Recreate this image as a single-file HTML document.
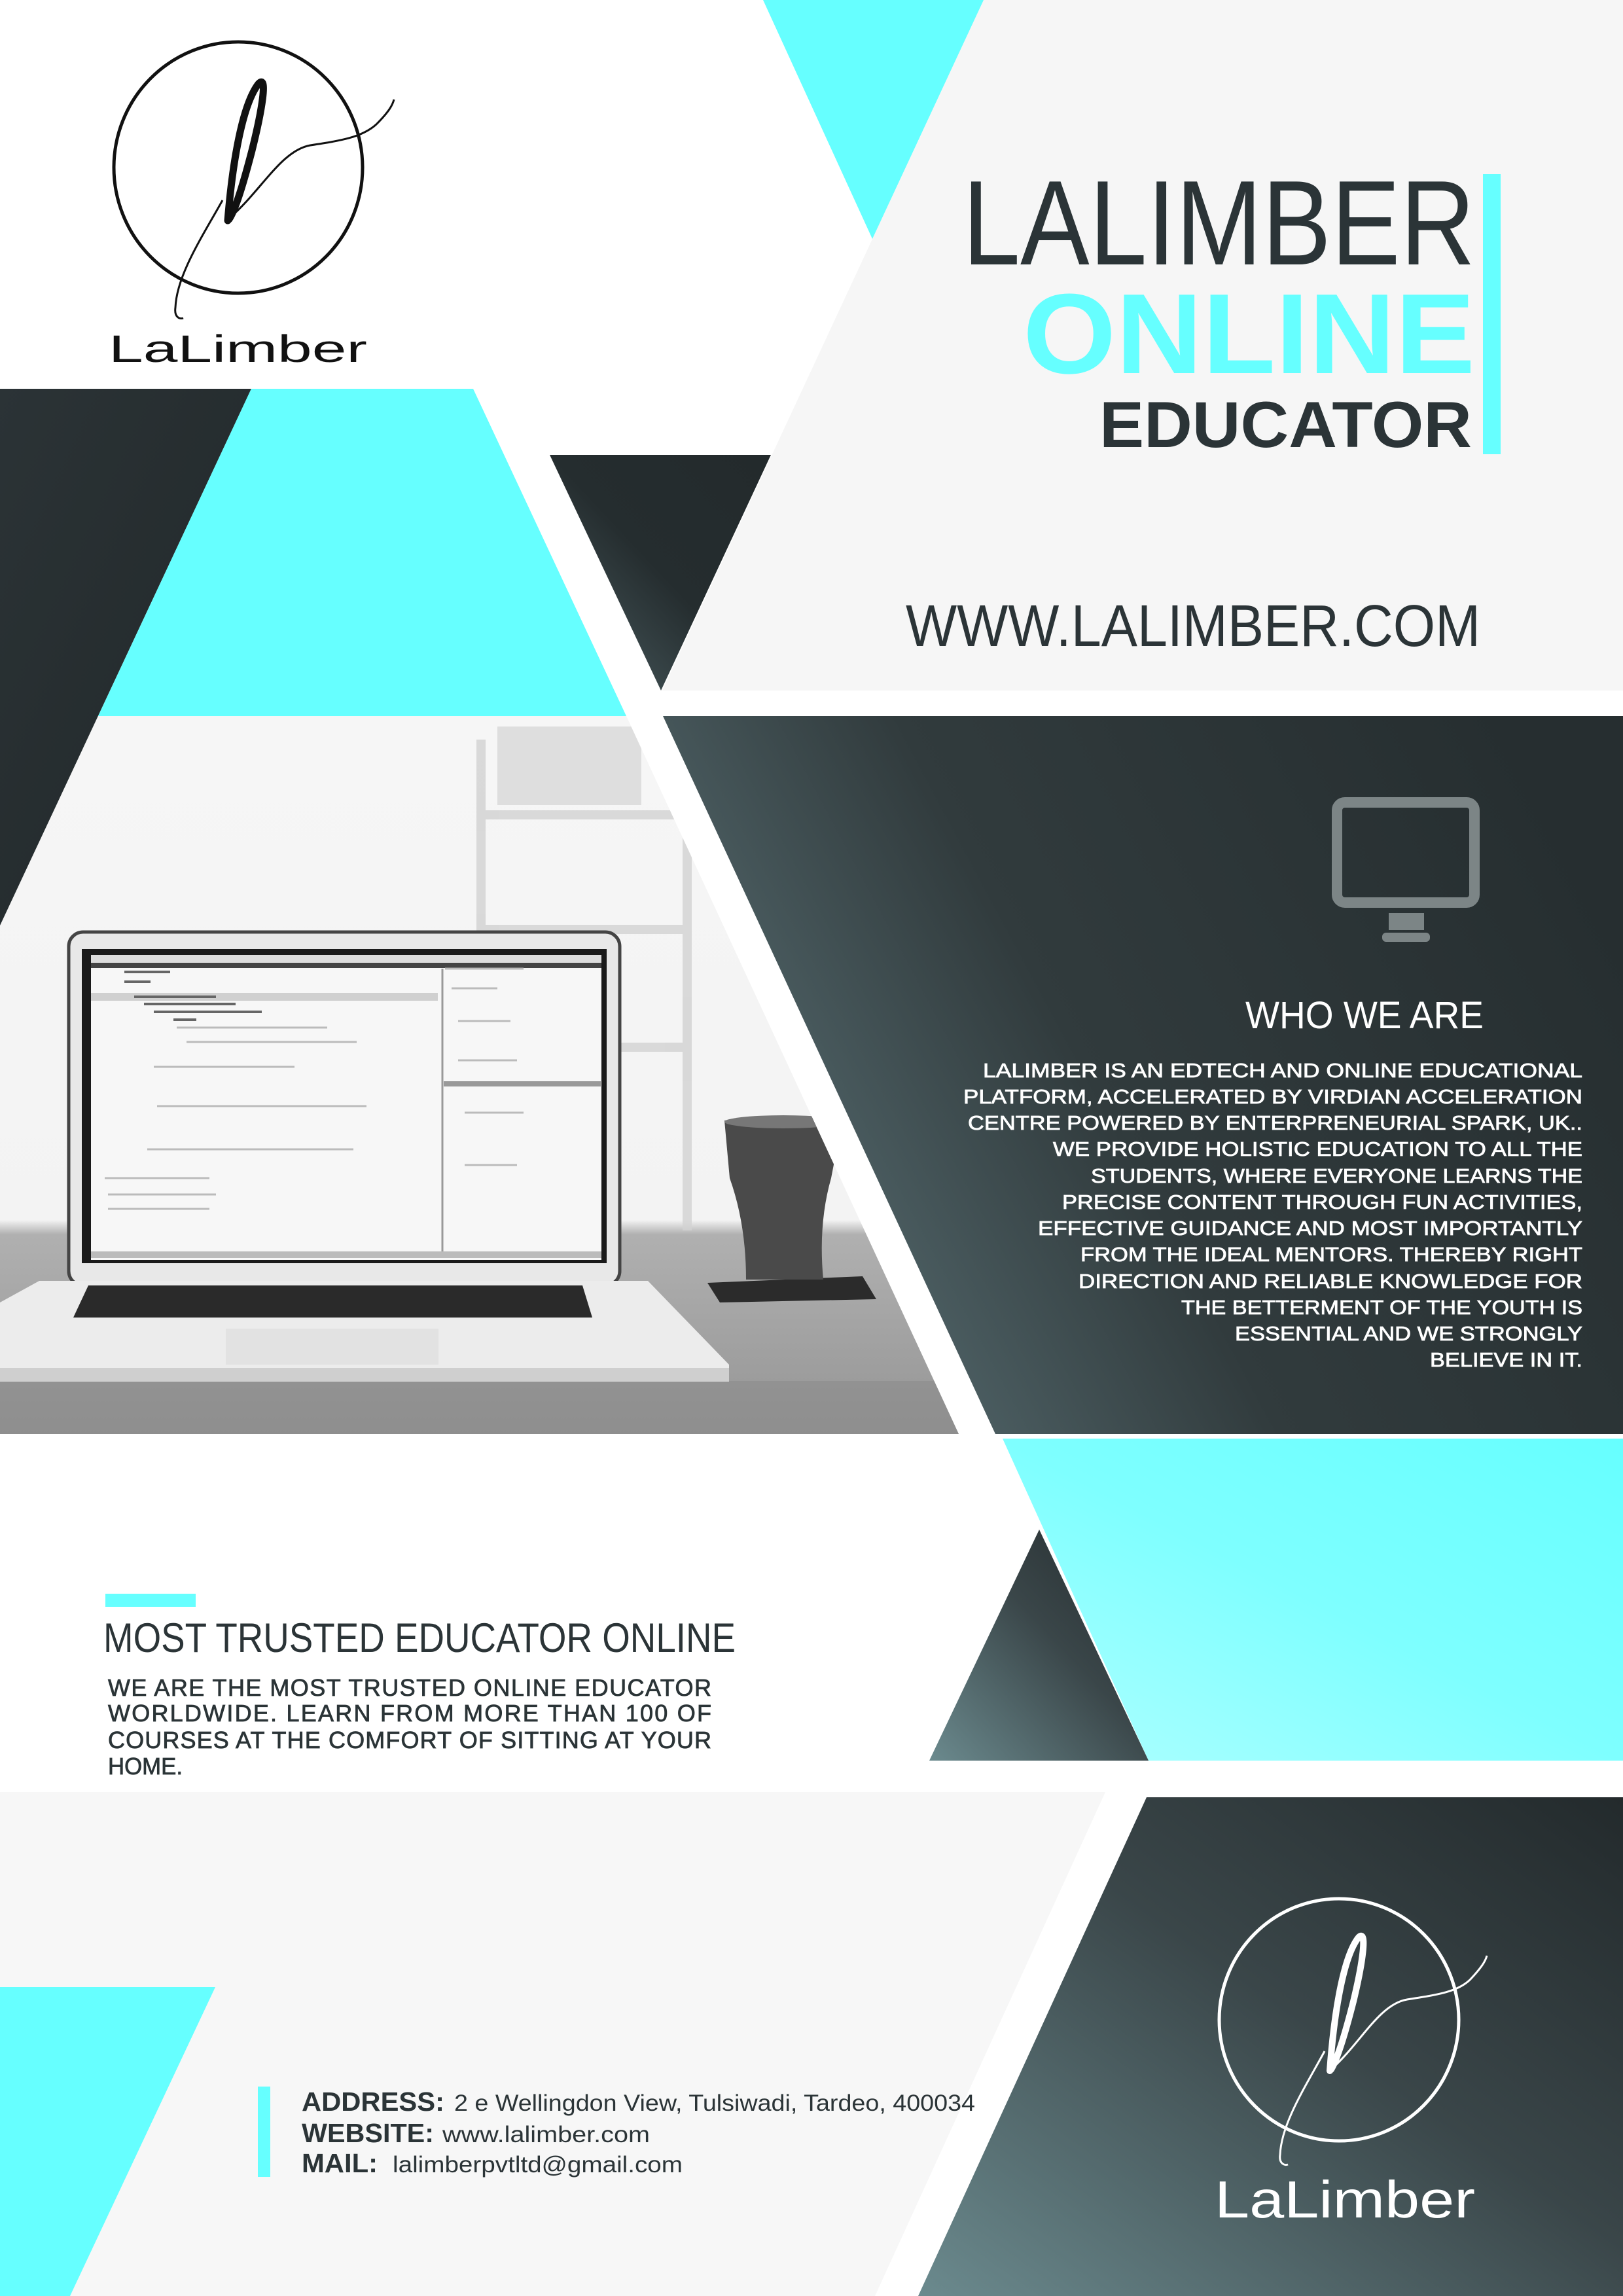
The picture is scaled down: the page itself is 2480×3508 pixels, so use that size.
<!DOCTYPE html>
<html><head><meta charset="utf-8"><style>
html,body{margin:0;padding:0;background:#fff;}
svg{display:block;}
text{font-family:"Liberation Sans",sans-serif;}
</style></head><body>
<svg width="2480" height="3508" viewBox="0 0 2480 3508" xmlns="http://www.w3.org/2000/svg">
<defs>
<linearGradient id="dk" x1="0" y1="0.7" x2="1" y2="0.3">
<stop offset="0" stop-color="#62797d"/><stop offset="0.15" stop-color="#4e6165"/><stop offset="0.45" stop-color="#313b3d"/><stop offset="1" stop-color="#262e30"/></linearGradient>
<linearGradient id="dkL" x1="0" y1="0" x2="1" y2="1">
<stop offset="0" stop-color="#2b3336"/><stop offset="0.6" stop-color="#252c2e"/><stop offset="1" stop-color="#3a4548"/></linearGradient>
<linearGradient id="dkT" x1="0" y1="1" x2="1" y2="0">
<stop offset="0" stop-color="#4d6064"/><stop offset="0.5" stop-color="#252d2f"/><stop offset="1" stop-color="#232a2c"/></linearGradient>
<linearGradient id="dkB" x1="0" y1="1" x2="1" y2="0">
<stop offset="0" stop-color="#6b8a8e"/><stop offset="0.55" stop-color="#3a4649"/><stop offset="1" stop-color="#232a2c"/></linearGradient>
<linearGradient id="cy" x1="0" y1="1" x2="1" y2="0">
<stop offset="0" stop-color="#b0ffff"/><stop offset="0.5" stop-color="#7effff"/><stop offset="1" stop-color="#66ffff"/></linearGradient>
<linearGradient id="photo" x1="0" y1="0" x2="0" y2="1">
<stop offset="0" stop-color="#f6f6f6"/><stop offset="0.7" stop-color="#f3f3f3"/><stop offset="0.72" stop-color="#b0b0b0"/><stop offset="1" stop-color="#959595"/></linearGradient>
<clipPath id="pc"><polygon points="0,1094 957,1094 1465,2191 0,2191"/></clipPath>
</defs>
<rect width="2480" height="3508" fill="#fff"/>

<polygon points="1503,0 2480,0 2480,1055 1012,1055" fill="#f6f6f6"/>
<polygon points="1166,0 1503,0 1333,365" fill="#66ffff"/>

<g clip-path="url(#pc)">
<rect x="0" y="1094" width="1500" height="1100" fill="url(#photo)"/>
<rect x="0" y="2110" width="1500" height="81" fill="#888" opacity="0.5"/>
<g stroke="#d2d2d2" stroke-width="14" fill="none" opacity="0.8">
<line x1="735" y1="1130" x2="735" y2="1880"/><line x1="1050" y1="1130" x2="1050" y2="1880"/>
<line x1="735" y1="1245" x2="1050" y2="1245"/><line x1="735" y1="1420" x2="1050" y2="1420"/><line x1="735" y1="1600" x2="1050" y2="1600"/></g>
<rect x="760" y="1110" width="220" height="120" fill="#bbb" opacity="0.4"/>
<rect x="105" y="1424" width="842" height="540" rx="22" fill="#e8e8e8" stroke="#444" stroke-width="5"/>
<rect x="125" y="1450" width="802" height="480" fill="#1a1a1a"/>
<rect x="139" y="1459" width="780" height="466" fill="#f7f7f7"/>
<rect x="139" y="1459" width="780" height="12" fill="#ddd"/>
<rect x="139" y="1471" width="780" height="8" fill="#444"/>
<rect x="139" y="1517" width="530" height="12" fill="#d0d0d0"/>
<g stroke="#666" stroke-width="4">
<line x1="190" y1="1485" x2="260" y2="1485"/><line x1="190" y1="1500" x2="230" y2="1500"/>
<line x1="205" y1="1523" x2="330" y2="1523"/><line x1="220" y1="1534" x2="360" y2="1534"/>
<line x1="235" y1="1546" x2="400" y2="1546"/><line x1="265" y1="1558" x2="300" y2="1558"/>
</g>
<g stroke="#bbb" stroke-width="3">
<line x1="270" y1="1570" x2="500" y2="1570"/><line x1="285" y1="1592" x2="545" y2="1592"/>
<line x1="235" y1="1630" x2="450" y2="1630"/><line x1="240" y1="1690" x2="560" y2="1690"/>
<line x1="225" y1="1756" x2="540" y2="1756"/><line x1="160" y1="1800" x2="320" y2="1800"/>
<line x1="165" y1="1825" x2="330" y2="1825"/><line x1="165" y1="1847" x2="320" y2="1847"/>
<line x1="680" y1="1480" x2="800" y2="1480"/><line x1="690" y1="1510" x2="760" y2="1510"/>
<line x1="700" y1="1560" x2="780" y2="1560"/><line x1="700" y1="1620" x2="790" y2="1620"/>
<line x1="710" y1="1700" x2="800" y2="1700"/><line x1="710" y1="1780" x2="790" y2="1780"/>
</g>
<line x1="676" y1="1480" x2="676" y2="1920" stroke="#999" stroke-width="3"/>
<rect x="678" y="1652" width="240" height="8" fill="#999"/>
<rect x="139" y="1912" width="780" height="10" fill="#bbb"/>
<polygon points="60,1957 990,1957 1114,2085 1114,2111 0,2111 0,1990" fill="#ececec"/>
<polygon points="135,1964 890,1964 905,2013 112,2013" fill="#2a2a2a"/>
<rect x="345" y="2030" width="325" height="55" fill="#e2e2e2"/>
<rect x="0" y="2090" width="1114" height="21" fill="#cfcfcf"/>
<polygon points="1081,1960 1318,1950 1339,1985 1100,1990" fill="#2b2b2b"/>
<path d="M1107 1712 Q1200 1700 1287 1712 L1270 1800 Q1250 1870 1258 1955 L1140 1955 Q1140 1870 1115 1800 Z" fill="#4a4a4a"/>
<ellipse cx="1197" cy="1714" rx="90" ry="10" fill="#777"/>
</g>

<polygon points="0,594 384,594 0,1414" fill="url(#dkL)"/>
<polygon points="384,594 723,594 957,1094 150,1094" fill="#66ffff"/>
<polygon points="840,695 1178,695 1010,1055" fill="url(#dkT)"/>

<polygon points="1013,1094 2480,1094 2480,2191 1521,2191" fill="url(#dk)"/>

<rect x="2043" y="1226" width="210" height="153" rx="12" fill="none" stroke="#7c8586" stroke-width="16"/>
<rect x="2122" y="1395" width="54" height="26" fill="#7c8586"/>
<rect x="2112" y="1425" width="73" height="14" rx="6" fill="#7c8586"/>

<text x="1903" y="1571" font-size="58" fill="#fff" textLength="364" lengthAdjust="spacingAndGlyphs">WHO WE ARE</text>
<g font-size="31" fill="#fff" stroke="#fff" stroke-width="0.8">
<text x="1502" y="1646" textLength="916" lengthAdjust="spacingAndGlyphs">LALIMBER IS AN EDTECH AND ONLINE EDUCATIONAL</text>
<text x="1472" y="1686" textLength="946" lengthAdjust="spacingAndGlyphs">PLATFORM, ACCELERATED BY VIRDIAN ACCELERATION</text>
<text x="1479" y="1726" textLength="939" lengthAdjust="spacingAndGlyphs">CENTRE POWERED BY ENTERPRENEURIAL SPARK, UK..</text>
<text x="1609" y="1766" textLength="809" lengthAdjust="spacingAndGlyphs">WE PROVIDE HOLISTIC EDUCATION TO ALL THE</text>
<text x="1667" y="1807" textLength="751" lengthAdjust="spacingAndGlyphs">STUDENTS, WHERE EVERYONE LEARNS THE</text>
<text x="1623" y="1847" textLength="795" lengthAdjust="spacingAndGlyphs">PRECISE CONTENT THROUGH FUN ACTIVITIES,</text>
<text x="1586" y="1887" textLength="832" lengthAdjust="spacingAndGlyphs">EFFECTIVE GUIDANCE AND MOST IMPORTANTLY</text>
<text x="1651" y="1927" textLength="767" lengthAdjust="spacingAndGlyphs">FROM THE IDEAL MENTORS. THEREBY RIGHT</text>
<text x="1648" y="1968" textLength="770" lengthAdjust="spacingAndGlyphs">DIRECTION AND RELIABLE KNOWLEDGE FOR</text>
<text x="1805" y="2008" textLength="613" lengthAdjust="spacingAndGlyphs">THE BETTERMENT OF THE YOUTH IS</text>
<text x="1887" y="2048" textLength="531" lengthAdjust="spacingAndGlyphs">ESSENTIAL AND WE STRONGLY</text>
<text x="2185" y="2088" textLength="233" lengthAdjust="spacingAndGlyphs">BELIEVE IN IT.</text>
</g>

<polygon points="1532,2198 2480,2198 2480,2690 1755,2690" fill="url(#cy)"/>
<polygon points="1588,2337 1755,2690 1420,2690" fill="url(#dkB)"/>

<text x="1471" y="404" font-size="184" fill="#2b3437" textLength="783" lengthAdjust="spacingAndGlyphs">LALIMBER</text>
<text x="1563" y="570" font-size="174" font-weight="bold" fill="#66ffff" textLength="691" lengthAdjust="spacingAndGlyphs">ONLINE</text>
<text x="1680" y="683" font-size="99" font-weight="bold" fill="#2b3437" textLength="569" lengthAdjust="spacingAndGlyphs">EDUCATOR</text>
<rect x="2266" y="266" width="27" height="428" fill="#66ffff"/>
<text x="1384" y="987" font-size="90" fill="#2b3437" textLength="878" lengthAdjust="spacingAndGlyphs">WWW.LALIMBER.COM</text>

<g fill="none" stroke="#111">
<ellipse cx="364" cy="256" rx="190" ry="192" stroke-width="5"/>
<path d="M348 337 C355 250 370 160 395 128 C410 112 400 170 385 230 C372 280 360 320 350 335" stroke-width="11" stroke-linecap="round"/>
<path d="M352 332 C400 290 430 230 474 222 C520 215 553 210 575 190 C595 170 600 160 602 152" stroke-width="3"/>
<path d="M340 306 C310 360 270 420 268 470 C266 485 275 488 280 486" stroke-width="3"/>
</g>
<text x="166" y="553" font-size="58" fill="#111" textLength="395" lengthAdjust="spacingAndGlyphs">LaLimber</text>

<rect x="161" y="2435" width="138" height="20" fill="#66ffff"/>
<text x="158" y="2524" font-size="63" fill="#2b3437" textLength="966" lengthAdjust="spacingAndGlyphs">MOST TRUSTED EDUCATOR ONLINE</text>
<g font-size="36" fill="#2b3437" stroke="#2b3437" stroke-width="0.8">
<text x="165" y="2591" textLength="922" lengthAdjust="spacing">WE ARE THE MOST TRUSTED ONLINE EDUCATOR</text>
<text x="165" y="2630" textLength="922" lengthAdjust="spacing">WORLDWIDE. LEARN FROM MORE THAN 100 OF</text>
<text x="165" y="2671" textLength="922" lengthAdjust="spacing">COURSES AT THE COMFORT OF SITTING AT YOUR</text>
<text x="165" y="2711" textLength="114" lengthAdjust="spacingAndGlyphs">HOME.</text>
</g>

<polygon points="0,2738 1689,2738 1337,3508 0,3508" fill="#f7f7f7"/>
<polygon points="1752,2746 2480,2746 2480,3508 1403,3508" fill="url(#dkB)"/>
<polygon points="0,3036 329,3036 107,3508 0,3508" fill="#66ffff"/>

<rect x="394" y="3188" width="19" height="138" fill="#66ffff"/>
<g fill="#2b3437">
<text x="461" y="3225" font-size="41" font-weight="bold" textLength="218" lengthAdjust="spacingAndGlyphs">ADDRESS:</text>
<text x="694" y="3225" font-size="35" textLength="796" lengthAdjust="spacingAndGlyphs">2 e Wellingdon View, Tulsiwadi, Tardeo, 400034</text>
<text x="461" y="3273" font-size="41" font-weight="bold" textLength="202" lengthAdjust="spacingAndGlyphs">WEBSITE:</text>
<text x="676" y="3273" font-size="35" textLength="317" lengthAdjust="spacingAndGlyphs">www.lalimber.com</text>
<text x="461" y="3319" font-size="41" font-weight="bold" textLength="116" lengthAdjust="spacingAndGlyphs">MAIL:</text>
<text x="600" y="3319" font-size="35" textLength="443" lengthAdjust="spacingAndGlyphs">lalimberpvtltd@gmail.com</text>
</g>

<g fill="none" stroke="#fff">
<ellipse cx="2046" cy="3086" rx="183" ry="185" stroke-width="5"/>
<path d="M2032 3164 C2038 3080 2052 2990 2076 2960 C2090 2946 2082 3000 2068 3058 C2056 3105 2044 3145 2034 3162" stroke-width="10" stroke-linecap="round"/>
<path d="M2036 3160 C2080 3120 2108 3062 2150 3055 C2194 3048 2226 3044 2246 3025 C2264 3006 2270 2996 2272 2988" stroke-width="3"/>
<path d="M2024 3134 C1996 3186 1958 3244 1956 3292 C1954 3306 1963 3309 1968 3307" stroke-width="3"/>
</g>
<text x="1856" y="3388" font-size="80" fill="#fff" textLength="398" lengthAdjust="spacingAndGlyphs">LaLimber</text>
</svg>
</body></html>
